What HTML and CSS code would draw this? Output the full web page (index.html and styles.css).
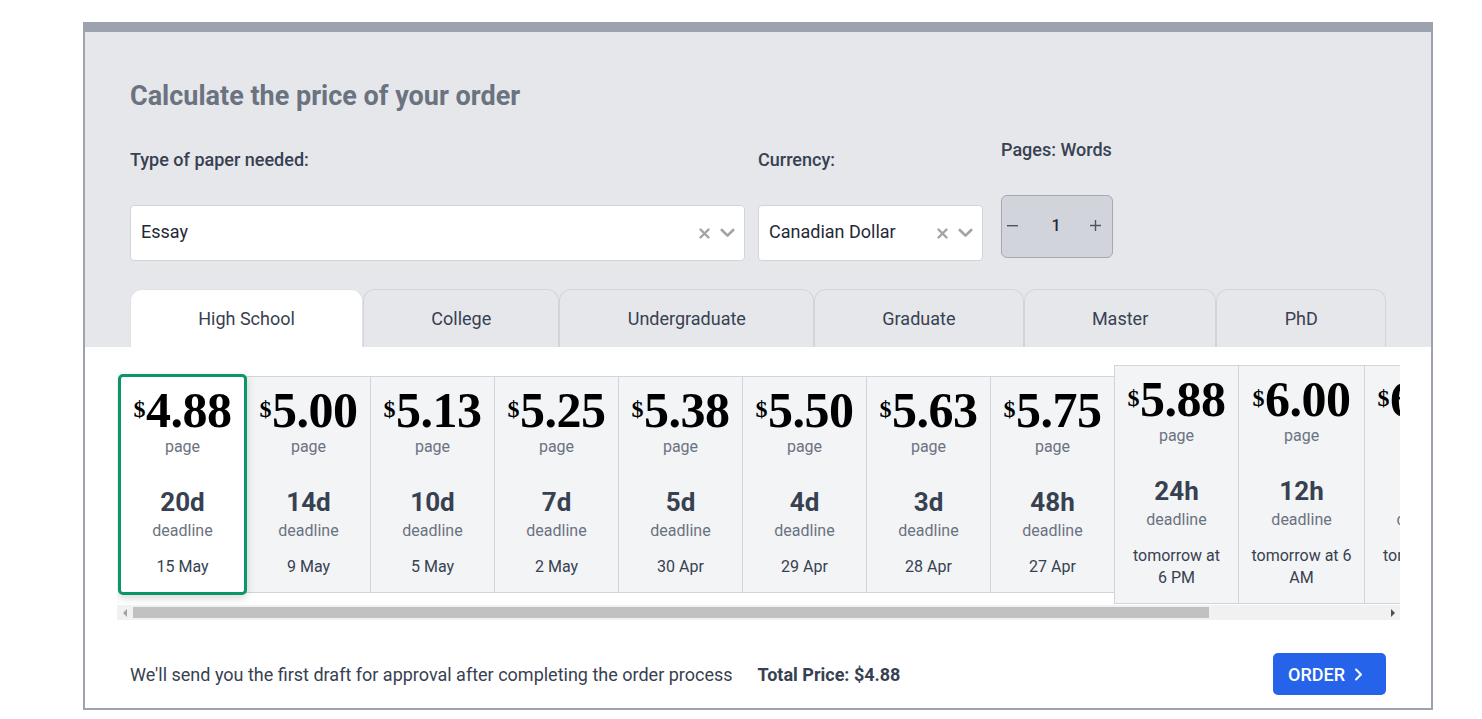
FILE: index.html
```html
<!DOCTYPE html>
<html lang="en">
<head>
<meta charset="utf-8">
<title>Price calculator</title>
<link rel="stylesheet" href="styles.css">
</head>
<body>
<div class="calc">
  <div class="top">
    <h2 class="title">Calculate the price of your order</h2>
    <div class="fields">
      <div class="field field-type">
        <div class="label">Type of paper needed:</div>
        <div class="select">
          <span class="select-value">Essay</span>
          <svg class="ico-x" width="11" height="11" viewBox="0 0 11 11"><path d="M1.5 1.5 L9.5 9.5 M9.5 1.5 L1.5 9.5" stroke="#a3a3a3" stroke-width="2.4" stroke-linecap="round"/></svg>
          <svg class="ico-chev" width="15" height="10" viewBox="0 0 15 10"><path d="M1.8 2 L7.5 7.6 L13.2 2" fill="none" stroke="#a3a3a3" stroke-width="2.6" stroke-linecap="round" stroke-linejoin="round"/></svg>
        </div>
      </div>
      <div class="field field-cur">
        <div class="label">Currency:</div>
        <div class="select">
          <span class="select-value">Canadian Dollar</span>
          <svg class="ico-x" width="11" height="11" viewBox="0 0 11 11"><path d="M1.5 1.5 L9.5 9.5 M9.5 1.5 L1.5 9.5" stroke="#a3a3a3" stroke-width="2.4" stroke-linecap="round"/></svg>
          <svg class="ico-chev" width="15" height="10" viewBox="0 0 15 10"><path d="M1.8 2 L7.5 7.6 L13.2 2" fill="none" stroke="#a3a3a3" stroke-width="2.6" stroke-linecap="round" stroke-linejoin="round"/></svg>
        </div>
      </div>
      <div class="field field-pages">
        <div class="label">Pages: Words</div>
        <div class="stepper">
          <span class="step-minus">
            <svg width="11" height="2" viewBox="0 0 11 2"><rect width="11" height="1.4" fill="#4b5563"/></svg>
          </span>
          <span class="step-value">1</span>
          <span class="step-plus">
            <svg width="11" height="11" viewBox="0 0 11 11"><path d="M0 5.5 H11 M5.5 0 V11" stroke="#4b5563" stroke-width="1.4"/></svg>
          </span>
        </div>
      </div>
    </div>
    <div class="tabs">
      <div class="tab active">High School</div>
      <div class="tab">College</div>
      <div class="tab">Undergraduate</div>
      <div class="tab">Graduate</div>
      <div class="tab">Master</div>
      <div class="tab">PhD</div>
    </div>
  </div>
  <div class="bottom">
    <div class="cards-wrap">
      <div class="cards">
        <div class="card sel">
          <div class="price"><span class="cur">$</span>4.88</div>
          <div class="unit">page</div>
          <div class="dl">20d</div>
          <div class="dlabel">deadline</div>
          <div class="date">15 May</div>
        </div>
        <div class="card">
          <div class="price"><span class="cur">$</span>5.00</div>
          <div class="unit">page</div>
          <div class="dl">14d</div>
          <div class="dlabel">deadline</div>
          <div class="date">9 May</div>
        </div>
        <div class="card">
          <div class="price"><span class="cur">$</span>5.13</div>
          <div class="unit">page</div>
          <div class="dl">10d</div>
          <div class="dlabel">deadline</div>
          <div class="date">5 May</div>
        </div>
        <div class="card">
          <div class="price"><span class="cur">$</span>5.25</div>
          <div class="unit">page</div>
          <div class="dl">7d</div>
          <div class="dlabel">deadline</div>
          <div class="date">2 May</div>
        </div>
        <div class="card">
          <div class="price"><span class="cur">$</span>5.38</div>
          <div class="unit">page</div>
          <div class="dl">5d</div>
          <div class="dlabel">deadline</div>
          <div class="date">30 Apr</div>
        </div>
        <div class="card">
          <div class="price"><span class="cur">$</span>5.50</div>
          <div class="unit">page</div>
          <div class="dl">4d</div>
          <div class="dlabel">deadline</div>
          <div class="date">29 Apr</div>
        </div>
        <div class="card">
          <div class="price"><span class="cur">$</span>5.63</div>
          <div class="unit">page</div>
          <div class="dl">3d</div>
          <div class="dlabel">deadline</div>
          <div class="date">28 Apr</div>
        </div>
        <div class="card">
          <div class="price"><span class="cur">$</span>5.75</div>
          <div class="unit">page</div>
          <div class="dl">48h</div>
          <div class="dlabel">deadline</div>
          <div class="date">27 Apr</div>
        </div>
        <div class="card">
          <div class="price"><span class="cur">$</span>5.88</div>
          <div class="unit">page</div>
          <div class="dl">24h</div>
          <div class="dlabel">deadline</div>
          <div class="date">tomorrow at<br>6 PM</div>
        </div>
        <div class="card">
          <div class="price"><span class="cur">$</span>6.00</div>
          <div class="unit">page</div>
          <div class="dl">12h</div>
          <div class="dlabel">deadline</div>
          <div class="date">tomorrow at 6<br>AM</div>
        </div>
        <div class="card">
          <div class="price"><span class="cur">$</span>6.25</div>
          <div class="unit">page</div>
          <div class="dl">8h</div>
          <div class="dlabel">deadline</div>
          <div class="date">tomorrow at<br>2 AM</div>
        </div>
      </div>
    </div>
    <div class="scrollbar">
      <div class="sb-btn"><span class="arrow-left"></span></div>
      <div class="sb-track"><div class="sb-thumb"></div></div>
      <div class="sb-btn"><span class="arrow-right"></span></div>
    </div>
    <div class="footer">
      <span class="note">We'll send you the first draft for approval after completing the order process</span>
      <span class="total">Total Price: $4.88</span>
      <button class="order" type="button">ORDER
        <svg width="9" height="13" viewBox="0 0 9 13"><path d="M2 1.5 L7 6.5 L2 11.5" fill="none" stroke="#fff" stroke-width="2" stroke-linecap="round" stroke-linejoin="round"/></svg>
      </button>
    </div>
  </div>
</div>
</body>
</html>
```

FILE: styles.css
```css
html, body {
  margin: 0;
  padding: 0;
  background: #ffffff;
}

body {
  font-family: Roboto, "Liberation Sans", Arial, sans-serif;
  color: #374151;
}

.calc {
  margin: 22px 0 0 83px;
  width: 1350px;
  box-sizing: border-box;
  border: 2px solid #9ca3af;
  border-top-width: 10px;
  background: #e5e7eb;
}

.top {
  padding: 48px 45px 0;
}

.title {
  margin: 0;
  font-size: 27px;
  line-height: 32px;
  font-weight: 700;
  color: #6b7280;
}

.fields {
  display: flex;
  align-items: flex-start;
  margin-top: 36px;
}

.label {
  font-size: 18px;
  line-height: 24px;
  font-weight: 500;
  color: #374151;
  margin-bottom: 33px;
}

.field-type {
  width: 615px;
}

.field-cur {
  width: 225px;
  margin-left: 13px;
}

.field-pages {
  width: 112px;
  margin-left: 18px;
  margin-top: -10px;
}

.select {
  height: 56px;
  box-sizing: border-box;
  border: 1px solid #d1d5db;
  border-radius: 4px;
  background: #ffffff;
  display: flex;
  align-items: center;
  padding: 0 9px 0 10px;
}

.select-value {
  flex: 1;
  font-size: 18px;
  line-height: 24px;
  color: #1f2937;
  margin-top: -2px;
}

.ico-x {
  display: block;
  margin-right: 1px;
}

.ico-chev {
  display: block;
  margin-left: 9px;
}

.stepper {
  height: 63px;
  box-sizing: border-box;
  border: 1px solid #a3a8b1;
  border-radius: 6px;
  background: #d1d5db;
  display: flex;
  align-items: center;
  padding-bottom: 2px;
}

.step-minus,
.step-plus {
  display: flex;
  justify-content: center;
}

.step-minus {
  width: 21px;
}

.step-plus {
  width: 12px;
}

.step-minus svg,
.step-plus svg {
  display: block;
}

.step-value {
  width: 66px;
  text-align: center;
  font-size: 16px;
  line-height: 20px;
  font-weight: 500;
  color: #1f2937;
}

.tabs {
  display: flex;
  height: 58px;
  margin-top: 28px;
}

.tab {
  flex: 1 1 auto;
  display: flex;
  align-items: center;
  justify-content: center;
  border: 1px solid #d1d5db;
  border-bottom: 0;
  border-radius: 12px 12px 0 0;
  font-size: 18px;
  color: #374151;
  background: #e5e7eb;
  padding-bottom: 1px;
}

.tab.active {
  background: #ffffff;
  border-color: #e0e2e6;
}

.bottom {
  background: #ffffff;
  padding: 18px 31px 13px 32px;
}

.cards-wrap {
  overflow: hidden;
}

.cards {
  display: flex;
  align-items: center;
  padding-left: 1px;
}

.card {
  flex: 0 0 auto;
  width: min-content;
  box-sizing: border-box;
  border: 1px solid #d1d5db;
  margin-left: -1px;
  background: #f3f4f6;
  padding: 7px 12.5px 14px;
  text-align: center;
}

.card.sel {
  border: 3px solid #0b9668;
  border-radius: 5px;
  background: #ffffff;
  box-shadow: 0 3px 8px rgba(0, 0, 0, 0.16);
  position: relative;
  z-index: 1;
  margin-left: 0;
}

.price {
  font-family: "Liberation Serif", "Times New Roman", serif;
  font-weight: 700;
  font-size: 50px;
  line-height: 52px;
  letter-spacing: -0.5px;
  white-space: nowrap;
  color: #000000;
}

.cur {
  font-size: 24px;
  line-height: 22px;
  vertical-align: 10px;
  margin-right: 1px;
}

.unit {
  font-size: 16px;
  line-height: 20px;
  color: #6b7280;
  margin-top: 1px;
}

.dl {
  font-size: 26px;
  line-height: 30px;
  font-weight: 700;
  color: #374151;
  margin-top: 30px;
}

.dlabel {
  font-size: 16px;
  line-height: 20px;
  color: #6b7280;
  margin-top: 4px;
}

.date {
  font-size: 16px;
  line-height: 22px;
  color: #374151;
  margin-top: 15px;
  white-space: nowrap;
}

.scrollbar {
  display: flex;
  height: 15px;
  margin-top: 1px;
  background: #f1f1f1;
}

.sb-btn {
  width: 15px;
  flex: 0 0 15px;
  display: flex;
  align-items: center;
  justify-content: center;
}

.arrow-left {
  width: 0;
  height: 0;
  border-top: 4px solid transparent;
  border-bottom: 4px solid transparent;
  border-right: 4px solid #a3a3a3;
}

.arrow-right {
  width: 0;
  height: 0;
  border-top: 4px solid transparent;
  border-bottom: 4px solid transparent;
  border-left: 4px solid #505050;
}

.sb-track {
  flex: 1;
  display: flex;
  align-items: center;
}

.sb-thumb {
  width: 1076px;
  height: 11px;
  margin-left: 1px;
  background: #c1c1c1;
}

.footer {
  display: flex;
  align-items: center;
  margin-top: 33px;
  padding: 0 14px 0 13px;
}

.note {
  font-size: 18px;
  color: #374151;
}

.total {
  font-size: 18px;
  font-weight: 700;
  color: #374151;
  margin-left: 25px;
}

.order {
  margin-left: auto;
  height: 42px;
  width: 113px;
  box-sizing: border-box;
  border: 0;
  border-radius: 5px;
  background: #2563eb;
  color: #ffffff;
  font-family: inherit;
  font-size: 18px;
  font-weight: 500;
  display: flex;
  align-items: center;
  gap: 9px;
  padding: 0 0 0 15px;
}

.order svg {
  display: block;
}
```
